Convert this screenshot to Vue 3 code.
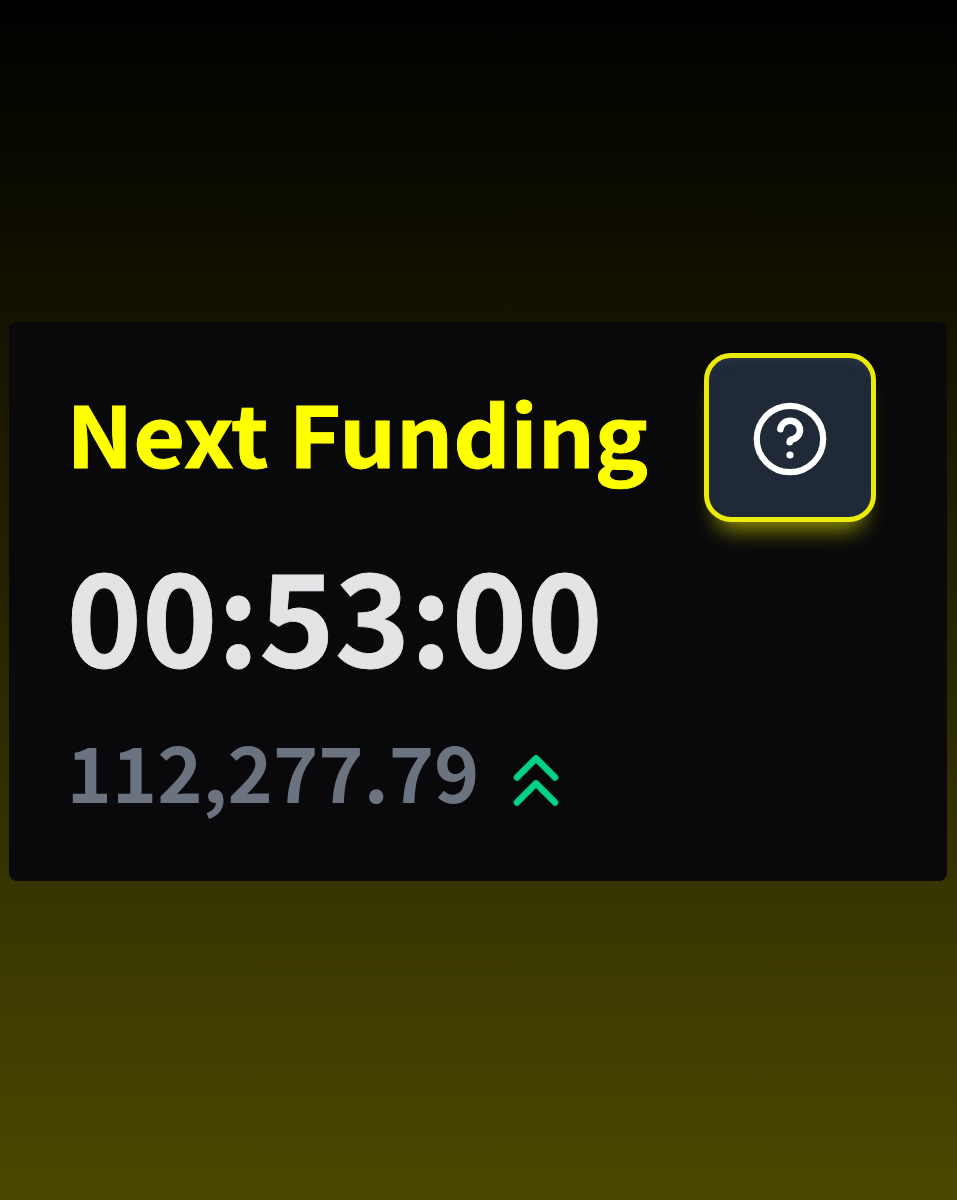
<script setup>
const title = 'Next Funding'
const countdown = '00:53:00'
const price = '112,277.79'
</script>

<template>
  <main class="page">
    <section class="card">
      <header class="head">
        <h1 class="title">{{ title }}</h1>
        <button class="help" aria-label="Help">
          <svg width="88" height="88" viewBox="0 0 88 88" fill="none" stroke="#fff" stroke-width="6.2" stroke-linecap="round" stroke-linejoin="round">
            <circle cx="44" cy="44" r="33.2" />
            <path stroke-width="6.6" d="M34.4 34.2A9.8 9.4 0 1 1 46 44.4Q43.7 45 43.7 47.2" />
            <circle cx="44" cy="60" r="3.6" fill="#fff" stroke="none" />
          </svg>
        </button>
      </header>
      <div class="countdown">{{ countdown }}</div>
      <div class="price-row">
        <span class="price">{{ price }}</span>
        <svg class="up" width="46" height="52" viewBox="0 0 46 52" fill="none" stroke="#00d084" stroke-width="6.6" stroke-linecap="round" stroke-linejoin="round">
          <path d="M4 23.4 23 4.4l19 19" />
          <path d="M4 48.4 23 29.4l19 19" />
        </svg>
      </div>
    </section>
  </main>
</template>

<style scoped>
.page {
  box-sizing: border-box;
  height: 1200px;
  padding: 322px 10px 0 9px;
  background: linear-gradient(#000 0%, #4a4800 100%);
  font-family: "Noto Sans CJK SC", "Noto Sans", sans-serif;
  font-weight: 700;
}
.card {
  box-sizing: border-box;
  height: 559px;
  padding: 31px 71px 0 57.5px;
  border-radius: 8px;
  background: #09090b;
}
.head {
  display: flex;
  justify-content: space-between;
  height: 169px;
}
.title {
  margin: 0;
  height: 154px;
  font-size: 89.2px;
  line-height: 154px;
  color: #ff0;
  white-space: nowrap;
  -webkit-text-stroke: 1px #ff0;
  transform: scaleY(.94);
  transform-origin: 0 115px;
}
.help {
  box-sizing: border-box;
  flex: none;
  width: 172px;
  height: 169px;
  padding: 2px 0 0;
  display: grid;
  place-items: center;
  border: 5.5px solid #ebeb08;
  border-radius: 27px;
  background: #1f2937;
  box-shadow: 0 20px 22px -13px rgba(255, 255, 0, .58), inset 0 6px 8px -4px rgba(80, 90, 120, .3);
}
.countdown {
  height: 188px;
  line-height: 180px;
  font-size: 128px;
  color: #e4e4e7;
  -webkit-text-stroke: .8px #e4e4e7;
}
.price-row {
  display: flex;
  align-items: center;
  gap: 34px;
  height: 120px;
}
.price {
  font-size: 76.9px;
  line-height: 120px;
  color: #6b7280;
}
.up {
  margin-top: 19px;
}
</style>

<style>
body { margin: 0; background: #000; }
</style>
